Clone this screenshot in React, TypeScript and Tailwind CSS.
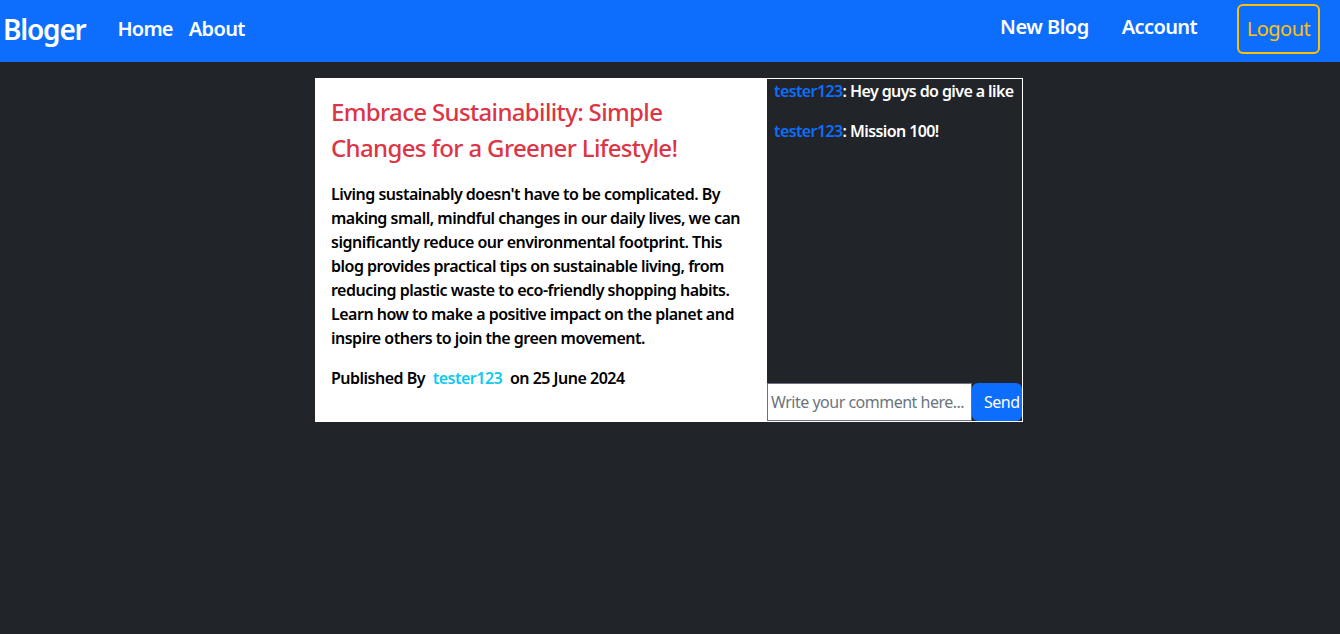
import React from 'react';

const font = { fontFamily: '"Noto Sans", "Open Sans", sans-serif' };

const Navbar: React.FC = () => {
  return (
    <nav className="h-[62px] bg-[#0d6efd] flex items-center justify-between text-white">
      <div className="flex items-center -mt-1">
        <a href="#" className="pl-[3px] text-[28px] font-semibold leading-none tracking-[-1.2px] mr-8">Bloger</a>
        <a href="#" className="text-[20px] font-semibold tracking-[-0.8px] mr-4">Home</a>
        <a href="#" className="text-[20px] font-semibold tracking-[-0.6px]">About</a>
      </div>
      <div className="flex items-center pr-5 -mt-1">
        <a href="#" className="text-[20px] font-semibold tracking-[-0.5px] mb-1 mr-[33px]">New Blog</a>
        <a href="#" className="text-[20px] font-semibold tracking-[-0.6px] mb-1 mr-10">Account</a>
        <button className="h-[50px] w-[83px] border-2 border-[#ffc107] rounded-md text-[#ffc107] text-[20px] tracking-[-0.5px]">Logout</button>
      </div>
    </nav>
  );
};

const comments = [
  { user: 'tester123', text: 'Hey guys do give a like' },
  { user: 'tester123', text: 'Mission 100!' },
];

export default function App() {
  return (
    <div className="min-h-[634px] bg-[#212529]" style={font}>
      <Navbar />
      <div className="flex justify-center mt-4 pr-[2px]">
        <div className="w-[451px] bg-white px-4 pt-4 pb-8 tracking-[-0.5px]">
          <h4 className="text-[24px] leading-[36px] font-medium tracking-[-0.65px] text-[#dc3545] mb-4">
            Embrace Sustainability: Simple Changes for a Greener Lifestyle!
          </h4>
          <p className="text-[16px] leading-[24px] font-semibold text-black mb-4">
            Living sustainably doesn't have to be complicated. By making small, mindful changes in our daily lives, we can significantly reduce our environmental footprint. This blog provides practical tips on sustainable living, from reducing plastic waste to eco-friendly shopping habits. Learn how to make a positive impact on the planet and inspire others to join the green movement.
          </p>
          <p className="text-[16px] leading-[24px] font-semibold text-black">
            Published By <span className="text-[#0dcaf0] mx-1">tester123</span> on 25 June 2024
          </p>
        </div>
        <div className="w-[257px] border border-white flex flex-col justify-between">
          <div className="pl-[7px] tracking-[-0.6px]">
            {comments.map((c, i) => (
              <p key={i} className="text-[16px] leading-[24px] font-semibold text-white mb-4 whitespace-nowrap">
                <span className="text-[#0d6efd]">{c.user}</span>: {c.text}
              </p>
            ))}
          </div>
          <div className="flex">
            <input
              className="w-[205px] h-[38px] bg-white border border-gray-500 px-[3px] text-[16px] tracking-[-0.5px] text-black placeholder:text-[#6c757d] outline-none"
              placeholder="Write your comment here..."
            />
            <button className="h-[38px] w-[50px] bg-[#0d6efd] text-white rounded-md pl-3 text-left text-[16px] tracking-[-0.5px] overflow-hidden whitespace-nowrap">
              Send
            </button>
          </div>
        </div>
      </div>
    </div>
  );
}
